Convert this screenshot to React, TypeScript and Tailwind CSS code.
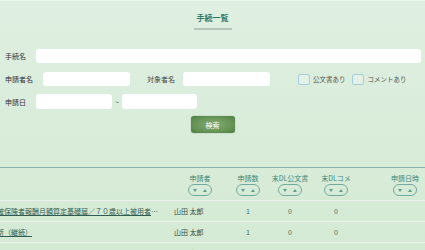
import React from 'react';

const font = { fontFamily: '"Noto Sans CJK JP", "Noto Sans", sans-serif' };

const SortPill: React.FC = () => (
  <div className="w-[24px] h-[12px] rounded-full border border-[#72ab9e] flex items-center justify-center gap-[6px]">
    <svg width="4" height="3" viewBox="0 0 4 3">
      <path d="M0 0 L4 0 L2 3 Z" fill="#5f9c8e" />
    </svg>
    <svg width="4" height="3" viewBox="0 0 4 3">
      <path d="M0 3 L4 3 L2 0 Z" fill="#5f9c8e" />
    </svg>
  </div>
);

const cols = 'grid grid-cols-[260px_56px_40px_44px_48px_90px] -ml-[88px]';

const headers = ['申請者', '申請数', '末DL公文書', '末DLコメ', '申請日時'];

const rows = [
  { title: '健康保険・厚生年金保険被保険者報酬月額算定基礎届／７０歳以上被用者算定基礎届', name: '山田 太郎', count: 1, doc: 0, cmt: 0 },
  { title: '労働保険料申告・年度更新（継続）', name: '山田 太郎', count: 1, doc: 0, cmt: 0 },
  { title: '雇用保険被保険者資格取得届', name: '山田 太郎', count: 1, doc: 0, cmt: 0 },
];

export default function App() {
  return (
    <div
      className="w-[425px] h-[250px] overflow-hidden bg-gradient-to-b from-[#dfefe1] to-[#d4ead4] text-[#333]"
      style={font}
    >
      <div className="h-[1px] bg-[#e9f4eb]" />
      <div className="pt-[12px] flex flex-col items-center">
        <div className="text-[8px] leading-[10px] font-bold text-[#2e7b6c]">手続一覧</div>
        <div className="mt-[5px] w-[38px] h-[2px] bg-[#b3c6b9]" />
      </div>

      <div className="mt-[19px] pl-[5px] pr-[4px] text-[7px] leading-[10px]">
        <div className="flex items-center h-[14px]">
          <span className="w-[31px]">手続名</span>
          <div className="flex-1 h-[14px] bg-white rounded-[3px]" />
        </div>

        <div className="flex items-center h-[14px] mt-[9px]">
          <span className="w-[38px]">申請者名</span>
          <div className="w-[87px] h-[14px] bg-white rounded-[3px]" />
          <span className="ml-[17px] w-[36px] text-[#444]">対象者名</span>
          <div className="w-[87px] h-[14px] bg-white rounded-[3px]" />
          <div className="ml-[28px] w-[12px] h-[11px] border border-[#a6cfdd] rounded-[2px] bg-[#e3f1e6]" />
          <span className="ml-[3px] text-[6.5px] text-[#555]">公文書あり</span>
          <div className="ml-[6px] w-[12px] h-[11px] border border-[#a6cfdd] rounded-[2px] bg-[#e3f1e6]" />
          <span className="ml-[4px] text-[6.5px] text-[#555]">コメントあり</span>
        </div>

        <div className="flex items-center h-[15px] mt-[8px]">
          <span className="w-[31px]">申請日</span>
          <div className="w-[76px] h-[15px] bg-white rounded-[3px]" />
          <span className="w-[10px] text-center text-[#555]">~</span>
          <div className="w-[75px] h-[15px] bg-white rounded-[3px]" />
        </div>
      </div>

      <div className="mt-[7px] flex justify-center">
        <button
          className="w-[44px] h-[17px] rounded-[3px] text-white text-[7px] leading-[10px] shadow-[0_0_1px_#4a7a40]"
          style={{ background: 'radial-gradient(ellipse at center, #86ad77 0%, #6a9659 55%, #4f7f43 100%)' }}
        >
          検索
        </button>
      </div>

      <div className="mt-[34px] border-t border-[#86b7aa] overflow-hidden">
        <div className={`${cols} h-[32px] text-[7px] leading-[10px] text-[#3b8a79]`}>
          <div />
          {headers.map((h) => (
            <div key={h} className="flex flex-col items-center pt-[5px]">
              <span className="whitespace-nowrap">{h}</span>
              <div className="mt-[1px]">
                <SortPill />
              </div>
            </div>
          ))}
        </div>
        {rows.map((r, i) => (
          <div key={i} className={`${cols} h-[21px] border-t border-[#e9f4ea] items-center text-[7px] leading-[10px]`}>
            <div className="pl-[8px] pr-[10px] overflow-hidden">
              <span className="block truncate underline text-[#2f5d53]">{r.title}</span>
            </div>
            <div className="pl-[2px] text-[#2e4f47] whitespace-nowrap">{r.name}</div>
            <div className="text-center text-[#3e6b60]">{r.count}</div>
            <div className="text-center text-[#3e6b60]">{r.doc}</div>
            <div className="text-center text-[#3e6b60]">{r.cmt}</div>
            <div />
          </div>
        ))}
      </div>
    </div>
  );
}
